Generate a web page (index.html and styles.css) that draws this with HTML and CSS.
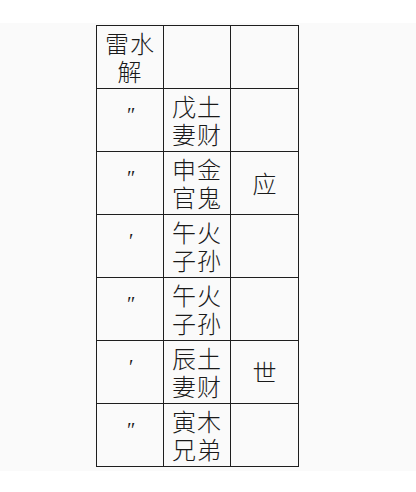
FILE: index.html
```html
<!DOCTYPE html>
<html lang="zh">
<head>
<meta charset="utf-8">
<link rel="stylesheet" href="styles.css">
</head>
<body>
<div class="band">
  <div class="grid">
    <div class="cell name">雷水<br>解</div>
    <div class="cell"></div>
    <div class="cell"></div>

    <div class="cell mark">″</div>
    <div class="cell pair">戊土<br>妻财</div>
    <div class="cell"></div>

    <div class="cell mark">″</div>
    <div class="cell pair">申金<br>官鬼</div>
    <div class="cell role">应</div>

    <div class="cell mark">′</div>
    <div class="cell pair">午火<br>子孙</div>
    <div class="cell"></div>

    <div class="cell mark">″</div>
    <div class="cell pair">午火<br>子孙</div>
    <div class="cell"></div>

    <div class="cell mark">′</div>
    <div class="cell pair">辰土<br>妻财</div>
    <div class="cell role">世</div>

    <div class="cell mark">″</div>
    <div class="cell pair">寅木<br>兄弟</div>
    <div class="cell"></div>
  </div>
</div>
</body>
</html>
```
FILE: styles.css
```css
html, body {
  margin: 0;
  padding: 0;
  background: #ffffff;
}
body {
  font-family: "Noto Sans CJK SC", "Liberation Sans", sans-serif;
  color: #1a1a1a;
}
.band {
  margin-top: 23px;
  height: 448px;
  background: #fafafa;
  padding-top: 2px;
  box-sizing: border-box;
}
.grid {
  margin-left: 96px;
  width: 203px;
  display: grid;
  grid-template-columns: 66px 66px 67px;
  grid-auto-rows: 62px;
  gap: 1px;
  padding: 1px;
  box-sizing: border-box;
  background: #1e1e1e;
}
.cell {
  background: #fafafa;
  display: flex;
  align-items: center;
  justify-content: center;
  text-align: center;
  font-size: 24px;
  line-height: 28px;
  font-weight: 300;
}
.name {
  letter-spacing: 1px;
}
.pair {
  letter-spacing: 1px;
}
.mark {
  font-family: "Liberation Serif", serif;
  font-style: italic;
  font-size: 20px;
  padding-bottom: 10px;
  box-sizing: border-box;
}
.role {
  font-size: 24px;
}
```
